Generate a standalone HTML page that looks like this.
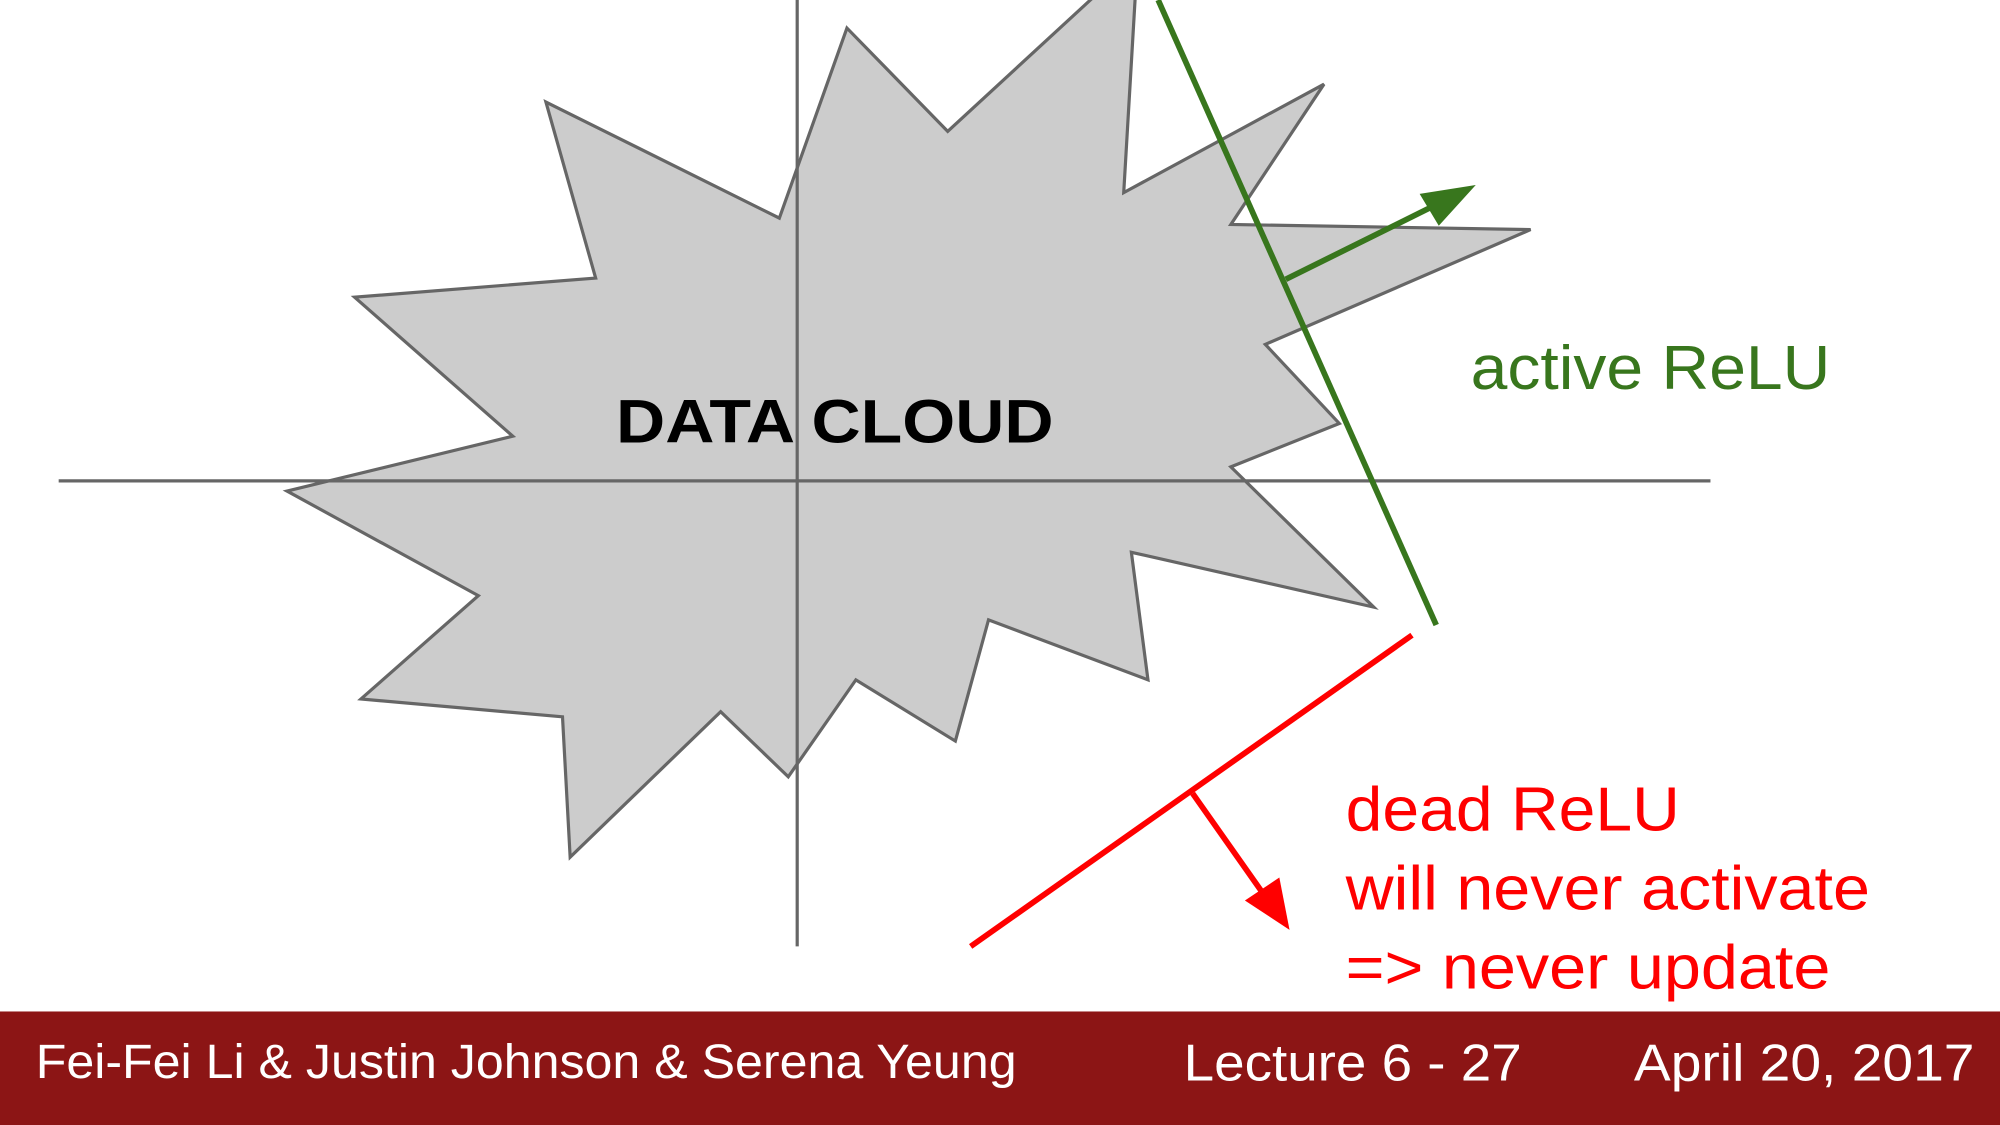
<!DOCTYPE html>
<html><head><meta charset="utf-8"><style>
html,body{margin:0;padding:0;background:#fff;width:2000px;height:1125px;overflow:hidden}
svg{display:block}
text{font-family:"Liberation Sans",Arial,sans-serif}
</style></head><body>
<svg width="2000" height="1125" viewBox="0 0 1568 882" xmlns="http://www.w3.org/2000/svg">
<rect width="1568" height="882" fill="#fff"/>
<polygon points="664,22 743,103 857,-2 890,-2 881,151 1038,66 965,176 1200,180 992,270 1050,332 965,366 1077,476 887,433 900,533 775,486 749,581 671,533 618,609 565,558 447,672 441,562 283,548 375,467 225,385 402,342 278,233 467,218 428,80 611,171" fill="#cccccc" stroke="#666" stroke-width="2.5" stroke-linejoin="miter"/>
<line x1="46" y1="377" x2="1341" y2="377" stroke="#666" stroke-width="2.5"/>
<line x1="625" y1="0" x2="625" y2="742" stroke="#666" stroke-width="2.5"/>
<text x="483" y="347" font-size="48" font-weight="bold" fill="#000" textLength="343" lengthAdjust="spacingAndGlyphs">DATA CLOUD</text>
<line x1="908" y1="0" x2="1126" y2="490" stroke="#38761d" stroke-width="4.5"/>
<line x1="1008" y1="219" x2="1125" y2="161" stroke="#38761d" stroke-width="4.5"/>
<polygon points="1157,145 1113,152 1128,177" fill="#38761d"/>
<line x1="761" y1="742" x2="1107" y2="498" stroke="#ff0000" stroke-width="4.5"/>
<line x1="935" y1="622" x2="992" y2="703" stroke="#ff0000" stroke-width="4.5"/>
<polygon points="1011,729 976,706 1003,688" fill="#ff0000"/>
<text x="1153" y="305" font-size="49" fill="#38761d" textLength="282" lengthAdjust="spacingAndGlyphs">active ReLU</text>
<text x="1055" y="651" font-size="49" fill="#ff0000" textLength="262" lengthAdjust="spacingAndGlyphs">dead ReLU</text>
<text x="1055" y="713" font-size="49" fill="#ff0000" textLength="411" lengthAdjust="spacingAndGlyphs">will never activate</text>
<text x="1055" y="775" font-size="49" fill="#ff0000" textLength="380" lengthAdjust="spacingAndGlyphs">=&gt; never update</text>
<rect x="0" y="793" width="1568" height="89" fill="#8c1515"/>
<text x="28" y="845" font-size="38" fill="#fff" textLength="769" lengthAdjust="spacingAndGlyphs">Fei-Fei Li &amp; Justin Johnson &amp; Serena Yeung</text>
<text x="928" y="847" font-size="41" fill="#fff" textLength="265" lengthAdjust="spacingAndGlyphs">Lecture 6 - 27</text>
<text x="1281" y="847" font-size="41" fill="#fff" textLength="267" lengthAdjust="spacingAndGlyphs">April 20, 2017</text>
</svg>
</body></html>
